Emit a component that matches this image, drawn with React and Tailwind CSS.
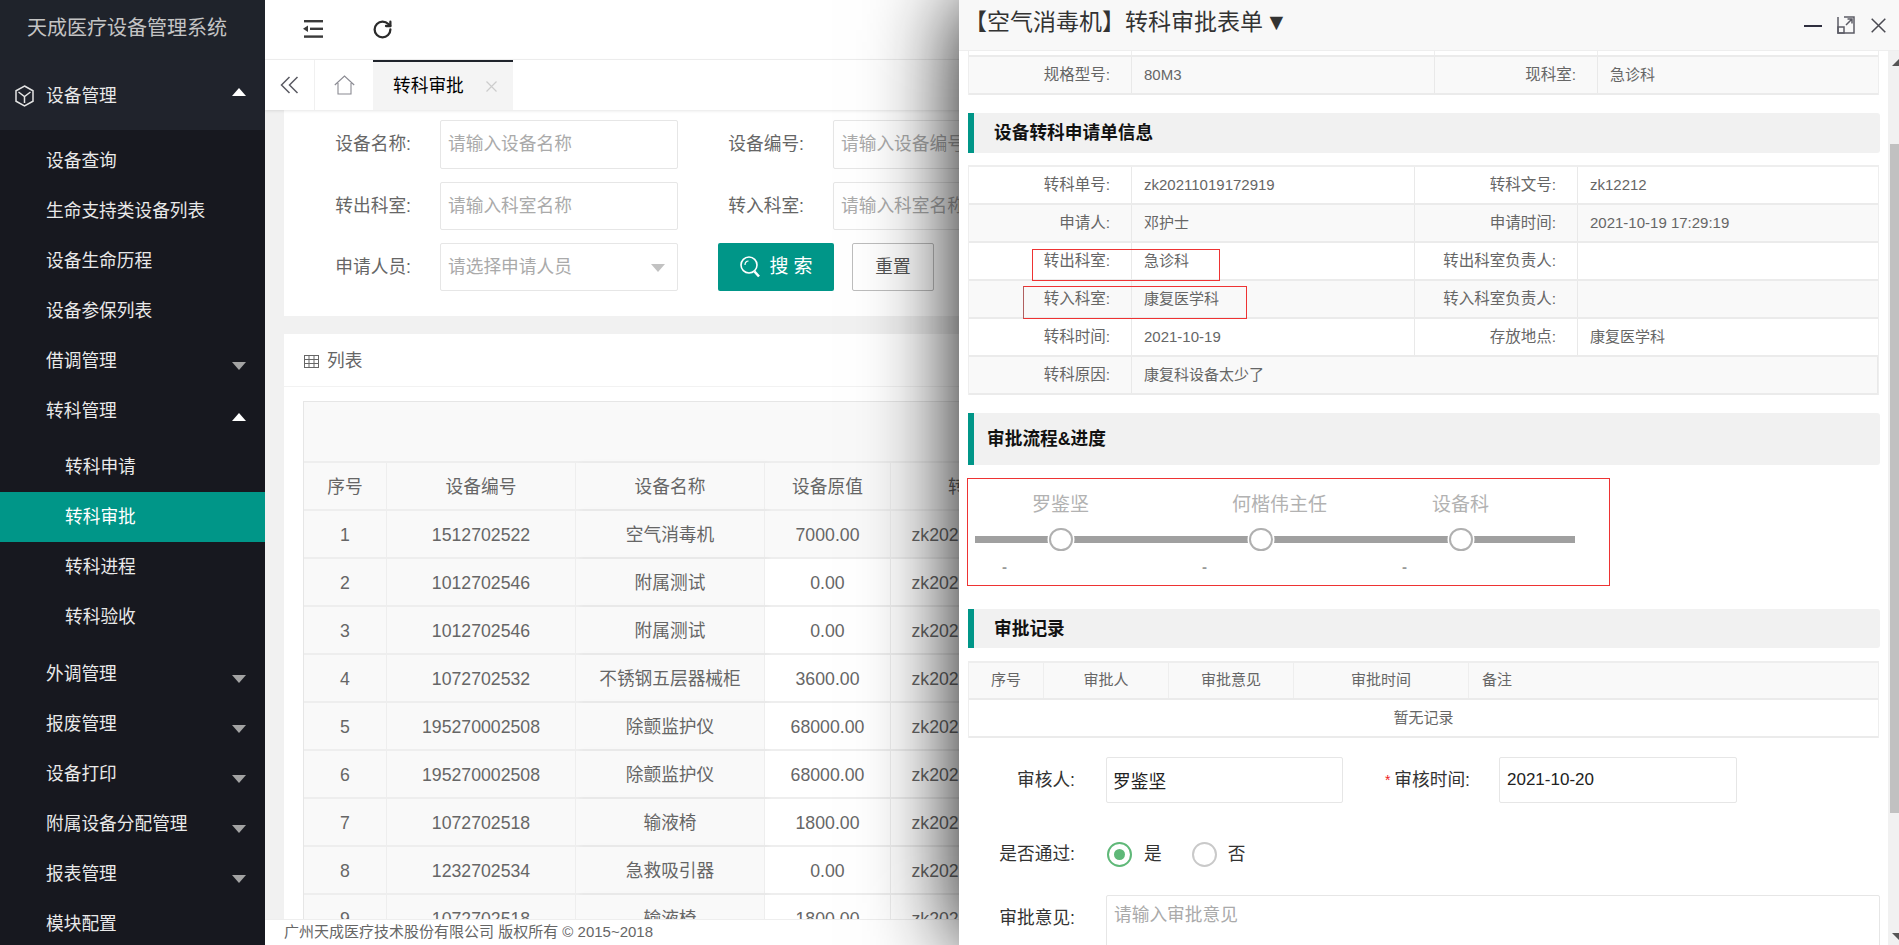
import React from "react";
import { RotateCw } from "lucide-react";

const Tri = ({ up, cls }) =>
  up ? (
    <span className={`w-0 h-0 border-x-[7px] border-x-transparent border-b-[8px] border-b-white ${cls || ""}`} />
  ) : (
    <span className={`w-0 h-0 border-x-[7px] border-x-transparent border-t-[8px] border-t-[#a3a3a3] ${cls || ""}`} />
  );

const SideRow = ({ text, arrow, sub, active }) => (
  <div className={`h-[50px] shrink-0 flex items-center justify-between pr-[19px] text-[17.7px] ${sub ? "pl-[65px]" : "pl-[46px]"} ${active ? "bg-[#009688] text-white" : "text-[#e9e9e9]"}`}>
    <span>{text}</span>
    {arrow === "down" && <Tri cls="mt-[10px]" />}
    {arrow === "up" && <Tri up cls="mt-[12px]" />}
  </div>
);

const Sidebar = () => (
  <aside className="w-[265px] shrink-0 h-full bg-[#17181f] flex flex-col overflow-hidden">
    <div className="h-[60px] shrink-0 bg-[#1f232b] flex items-center pl-[27px] pb-[5px] text-[20px] text-[#c4c4c4]">天成医疗设备管理系统</div>
    <div className="h-[70px] shrink-0 bg-[#20232c] pt-[2px] flex items-center justify-between pl-[15px] pr-[19px] text-[17.7px] text-[#e9e9e9]">
      <span className="flex items-center gap-[12px]">
        <svg width="19" height="22" viewBox="0 0 19 22" fill="none" stroke="#e4e4e4" strokeWidth="1.5">
          <path d="M9.5 1L18 5.8V16.2L9.5 21L1 16.2V5.8Z" />
          <path d="M3.5 7L9.5 11.5L15.5 7M9.5 11.5V18" />
        </svg>
        设备管理
      </span>
      <Tri up cls="mb-[8px]" />
    </div>
    <div className="pt-[6px] shrink-0">
      <SideRow text="设备查询" />
      <SideRow text="生命支持类设备列表" />
      <SideRow text="设备生命历程" />
      <SideRow text="设备参保列表" />
      <SideRow text="借调管理" arrow="down" />
      <SideRow text="转科管理" arrow="up" />
      <div className="pt-[6px] pb-[7px]">
        <SideRow sub text="转科申请" />
        <SideRow sub active text="转科审批" />
        <SideRow sub text="转科进程" />
        <SideRow sub text="转科验收" />
      </div>
      <SideRow text="外调管理" arrow="down" />
      <SideRow text="报废管理" arrow="down" />
      <SideRow text="设备打印" arrow="down" />
      <SideRow text="附属设备分配管理" arrow="down" />
      <SideRow text="报表管理" arrow="down" />
      <SideRow text="模块配置" />
    </div>
  </aside>
);

const Field = ({ label, placeholder, select }) => (
  <div className="flex items-center">
    <span className="w-[77px] text-[17.7px] text-[#666] text-right whitespace-nowrap">{label}</span>
    <div className="relative ml-[29px] w-[238px] h-full">
      <input
        readOnly
        placeholder={placeholder}
        className="w-full h-full border border-[#e6e6e6] rounded-[2px] pl-[7px] text-[17.7px] bg-white placeholder:text-[#aaaaaa] outline-none"
      />
      {select && (
        <span className="absolute right-[13px] top-[21px] w-0 h-0 border-x-[7px] border-x-transparent border-t-[8px] border-t-[#c2c2c2]" />
      )}
    </div>
  </div>
);

const rows = [
  ["1", "1512702522", "空气消毒机", "7000.00"],
  ["2", "1012702546", "附属测试", "0.00"],
  ["3", "1012702546", "附属测试", "0.00"],
  ["4", "1072702532", "不锈钢五层器械柜", "3600.00"],
  ["5", "195270002508", "除颤监护仪", "68000.00"],
  ["6", "195270002508", "除颤监护仪", "68000.00"],
  ["7", "1072702518", "输液椅", "1800.00"],
  ["8", "1232702534", "急救吸引器", "0.00"],
  ["9", "1072702518", "输液椅", "1800.00"],
];

const ListRow = ({ cells, hover, head }) => (
  <div className="grid grid-cols-[83px_189px_189px_126px_186px_1fr] border-b-2 border-[#eeeeee] text-[17.7px] text-[#666] h-[48px]">
    {cells.map((c, i) => (
      <div
        key={i}
        className={`flex items-center justify-center pt-[2px] border-r border-[#eeeeee] whitespace-nowrap ${i < 3 || hover || head ? "bg-[#f9f9f9]" : "bg-white"} ${i === 2 ? "shadow-[4px_0_6px_rgba(0,0,0,0.03)]" : ""} ${i === 4 && !head ? "pl-[10px]" : ""}`}
      >
        {c}
      </div>
    ))}
  </div>
);

const Main = () => (
  <div className="flex-1 min-w-0 h-full flex flex-col bg-[#f1f1f1]">
    <div className="h-[60px] bg-white border-b border-[#f0f0f0] flex items-center pb-[2px] pl-[38px] gap-[48px] shrink-0">
      <svg width="20" height="18" viewBox="0 0 20 18" fill="#3a3a3a">
        <rect x="1" y="0" width="19" height="2.4" />
        <rect x="7" y="7.6" width="13" height="2.4" />
        <rect x="1" y="15.4" width="19" height="2.4" />
        <path d="M0 8.8L5 5.5V12Z" />
      </svg>
      <RotateCw size={21} strokeWidth={2.6} color="#2b2b2b" className="mt-[1px] ml-[1px]" />
    </div>
    <div className="h-[50px] bg-white flex shrink-0 shadow-[0_1px_3px_rgba(0,0,0,0.1)] relative z-10">
      <div className="w-[50px] border-r border-[#f0f0f0] flex items-center justify-center">
        <svg width="19" height="18" viewBox="0 0 19 18" fill="none" stroke="#5a5a62" strokeWidth="1.5">
          <path d="M9.5 1L1.5 9L9.5 17M17.5 1L9.5 9L17.5 17" />
        </svg>
      </div>
      <div className="w-[58px] flex items-center justify-center">
        <svg width="21" height="20" viewBox="0 0 21 20" fill="none" stroke="#8a8a92" strokeWidth="1.1">
          <path d="M0.8 10L10.5 1L20.2 10M4 8V19H17V8" />
        </svg>
      </div>
      <div className="w-[140px] border-t-2 border-[#1f232b] bg-[#f4f4f4] flex items-center pl-[20px] text-[17.7px] text-black">
        转科审批
        <svg className="ml-[22px]" width="11" height="11" viewBox="0 0 11 11" fill="none" stroke="#cccccc" strokeWidth="1.2">
          <path d="M0.5 0.5L10.5 10.5M10.5 0.5L0.5 10.5" />
        </svg>
      </div>
    </div>
    <div className="flex-1 min-h-0 overflow-hidden pl-[19px]">
      <div className="bg-white h-[206px] pt-[10px] pl-[50px] w-[1600px] flex flex-col gap-[13px]">
        <div className="flex h-[49px] gap-[49px]">
          <Field label="设备名称:" placeholder="请输入设备名称" />
          <Field label="设备编号:" placeholder="请输入设备编号" />
        </div>
        <div className="flex h-[48px] gap-[49px]">
          <Field label="转出科室:" placeholder="请输入科室名称" />
          <Field label="转入科室:" placeholder="请输入科室名称" />
        </div>
        <div className="flex h-[48px]">
          <Field label="申请人员:" placeholder="请选择申请人员" select />
          <button className="ml-[40px] w-[116px] h-full bg-[#009688] rounded-[2px] pl-[5px] text-white text-[19px] flex items-center justify-center gap-[8px] tracking-[5px]">
            <svg width="22" height="24" viewBox="0 0 22 24" fill="none" stroke="white" strokeWidth="1.6">
              <circle cx="10" cy="10" r="8" />
              <path d="M15.5 16.5L20 21.5" strokeWidth="2.6" />
              <path d="M6 10C6 7.5 7.5 6 9.5 6" strokeWidth="1.2" />
            </svg>
            搜索
          </button>
          <button className="ml-[18px] w-[82px] h-full bg-white border border-[#bdbdbd] rounded-[2px] text-[17.7px] text-[#555]">重置</button>
        </div>
      </div>
      <div className="bg-white mt-[18px] w-[1600px] h-[640px]">
        <div className="h-[53px] border-b border-[#f2f2f2] flex items-center pt-[2px] pl-[20px] text-[17.7px] text-[#666] gap-[8px]">
          <svg width="15" height="13" viewBox="0 0 15 13" fill="none" stroke="#666" strokeWidth="1">
            <rect x="0.5" y="0.5" width="14" height="12" />
            <path d="M0.5 4.5H14.5M0.5 8.5H14.5M5 0.5V12.5M10 0.5V12.5" />
          </svg>
          列表
        </div>
        <div className="ml-[19px] mt-[14px] border-l border-t border-[#e6e6e6]">
          <div className="h-[61px] bg-[#f9f9f9] border-b-2 border-[#eeeeee]" />
          <ListRow head cells={["序号", "设备编号", "设备名称", "设备原值", "转科单号", ""]} />
          {rows.map((r, i) => (
            <ListRow key={r[0]} hover={i === 0} cells={[...r, "zk20211019172919", ""]} />
          ))}
        </div>
      </div>
    </div>
    <div className="h-[26px] bg-white border-t border-[#eeeeee] shrink-0 flex items-center pl-[19px] text-[15px] text-[#666] relative z-10">
      广州天成医疗技术股份有限公司 版权所有 © 2015~2018
    </div>
  </div>
);

const Cell = ({ label, children, right }) => (
  <div className={`flex items-center h-full border-r border-[#e9e9e9] whitespace-nowrap ${label ? "justify-end pr-[21px] text-[15.5px]" : "pl-[12px]"} ${right ? "border-r-0" : ""}`}>
    {children}
  </div>
);

const InfoRow = ({ cols, odd, a, b, c, d }) => (
  <div className={`grid ${cols} h-[38px] border-b-2 border-[#ebebeb] text-[15px] text-[#666] ${odd ? "bg-[#f9f9f9]" : "bg-white"}`}>
    <Cell label>{a}</Cell>
    <Cell>{b}</Cell>
    {c !== undefined && <Cell label>{c}</Cell>}
    {d !== undefined && <Cell right>{d}</Cell>}
  </div>
);

const SectionBar = ({ title, h, pl }) => (
  <div className={`bg-[#f1f1f1] border-l-[6px] border-[#009688] rounded-r-[3px] flex items-center pt-[1px] font-bold text-[17.7px] text-[#111] ${h} ${pl}`}>{title}</div>
);

const Step = ({ name }) => (
  <div className="w-[200px] shrink-0">
    <div className="h-[57px] pl-[57px] pt-[13px] text-[19px] text-[#b2b2b2] leading-[26px] whitespace-nowrap">{name}</div>
    <div className="relative h-[7px] bg-[#a0a0a0]">
      <span className="absolute left-[74px] top-[-8px] w-[24px] h-[23px] rounded-full bg-white border-2 border-[#b0b0b0] shadow-[0_0_0_1.5px_white]" />
    </div>
    <div className="h-[49px] pl-[27px] flex items-center font-bold text-[15px] text-[#999]">-</div>
  </div>
);

const Drawer = () => {
  const cols4 = "grid-cols-[163px_283px_163px_1fr]";
  const cols4b = "grid-cols-[163px_303px_163px_1fr]";
  return (
    <div className="absolute right-0 top-0 w-[940px] h-[945px] bg-white flex flex-col shadow-[0_0_85px_rgba(0,0,0,0.95)] z-20">
      <div className="h-[51px] shrink-0 bg-[#f8f8f8] border-b border-[#eeeeee] flex items-center pl-[5px] pr-[13px]">
        <span className="text-[23px] text-[#333] flex-1 pb-[6px] whitespace-nowrap">【空气消毒机】转科审批表单<span className="ml-[2px]">▼</span></span>
        <span className="w-[18px] h-[2px] bg-[#2f2f3f] mt-[1px]" />
        <svg className="ml-[15px]" width="18" height="18" viewBox="0 0 18 18" fill="none" stroke="#5c5c66" strokeWidth="1.5">
          <path d="M7 1H17V17H1V7M1 1V7" />
          <rect x="1" y="11" width="6" height="6" />
          <path d="M9 9L15 3M10.5 3H15V7.5" />
        </svg>
        <svg className="ml-[16px]" width="15" height="15" viewBox="0 0 15 15" fill="none" stroke="#4a4a52" strokeWidth="1.5">
          <path d="M0.7 0.7L14.3 14.3M14.3 0.7L0.7 14.3" />
        </svg>
      </div>
      <div className="flex-1 min-h-0 flex">
        <div className="flex-1 min-w-0 overflow-hidden pl-[9px] pr-[8px]">
          <div className="border-x border-[#eeeeee] w-[911px]">
            <div className={`grid ${cols4b} h-[6px] border-b-2 border-[#ebebeb]`}>
              <div className="border-r border-[#eeeeee]" />
              <div className="border-r border-[#eeeeee]" />
              <div className="border-r border-[#eeeeee]" />
            </div>
            <InfoRow cols={cols4b} odd a="规格型号:" b="80M3" c="现科室:" d="急诊科" />
          </div>
          <div className="mt-[18px]"><SectionBar title="设备转科申请单信息" h="h-[40px]" pl="pl-[20px]" /></div>
          <div className="relative mt-[12px] w-[911px] border-x border-t-2 border-[#eeeeee]">
            <InfoRow cols={cols4} a="转科单号:" b="zk20211019172919" c="转科文号:" d="zk12212" />
            <InfoRow cols={cols4} odd a="申请人:" b="邓护士" c="申请时间:" d="2021-10-19 17:29:19" />
            <InfoRow cols={cols4} a="转出科室:" b="急诊科" c="转出科室负责人:" d="" />
            <InfoRow cols={cols4} odd a="转入科室:" b="康复医学科" c="转入科室负责人:" d="" />
            <InfoRow cols={cols4} a="转科时间:" b="2021-10-19" c="存放地点:" d="康复医学科" />
            <InfoRow cols="grid-cols-[163px_1fr]" odd a="转科原因:" b="康复科设备太少了" />
            <span className="absolute left-[63px] top-[82px] w-[188px] h-[32px] border border-[#ee3333]" />
            <span className="absolute left-[54px] top-[119px] w-[224px] h-[33px] border border-[#ee3333] border-l-[#b06060]" />
          </div>
          <div className="mt-[18px]"><SectionBar title="审批流程&进度" h="h-[52px]" pl="pl-[13px]" /></div>
          <div className="mt-[13px] -ml-[1px] w-[643px] h-[108px] border border-[#ee3333] pl-[7px] flex overflow-hidden">
            <Step name="罗鉴坚" />
            <Step name="何楷伟主任" />
            <Step name="设备科" />
          </div>
          <div className="mt-[23px]"><SectionBar title="审批记录" h="h-[39px]" pl="pl-[20px]" /></div>
          <div className="mt-[13px] w-[911px] border-x border-t-2 border-[#eeeeee] text-[15px] text-[#666]">
            <div className="grid grid-cols-[75px_125px_125px_175px_1fr] h-[37px] bg-[#f9f9f9] border-b-2 border-[#ebebeb]">
              {["序号", "审批人", "审批意见", "审批时间"].map((t) => (
                <div key={t} className="flex items-center justify-center border-r border-[#eeeeee]">{t}</div>
              ))}
              <div className="flex items-center pl-[13px]">备注</div>
            </div>
            <div className="h-[38px] flex items-center justify-center border-b-2 border-[#ebebeb]">暂无记录</div>
          </div>
          <div className="mt-[19px] flex h-[46px] text-[17.7px] text-[#333]">
            <span className="w-[108px] pr-[1px] flex items-center justify-end whitespace-nowrap">审核人:</span>
            <input readOnly defaultValue="罗鉴坚" className="ml-[30px] w-[237px] h-full border border-[#e6e6e6] rounded-[2px] pl-[6px] text-[17.7px] text-[#222] outline-none" />
            <span className="ml-[39px] w-[88px] flex items-center justify-end whitespace-nowrap"><span className="text-[#ee2222] text-[14px] mr-[4px]">*</span>审核时间:</span>
            <input readOnly defaultValue="2021-10-20" className="ml-[29px] w-[238px] h-full border border-[#e6e6e6] rounded-[2px] pl-[7px] text-[17px] text-[#222] outline-none" />
          </div>
          <div className="mt-[31px] h-[40px] flex items-center text-[17.7px] text-[#333]">
            <span className="w-[108px] pr-[1px] text-right whitespace-nowrap">是否通过:</span>
            <span className="ml-[31px] w-[25px] h-[25px] rounded-full border-2 border-[#5fb878] flex items-center justify-center">
              <span className="w-[11px] h-[11px] rounded-full bg-[#5fb878]" />
            </span>
            <span className="ml-[12px]">是</span>
            <span className="ml-[30px] w-[25px] h-[25px] rounded-full border-2 border-[#c9c9c9]" />
            <span className="ml-[11px]">否</span>
          </div>
          <div className="mt-[21px] flex text-[17.7px] text-[#333]">
            <span className="w-[108px] pr-[1px] pt-[10px] text-right whitespace-nowrap">审批意见:</span>
            <textarea readOnly placeholder="请输入审批意见" className="ml-[30px] flex-1 h-[100px] border border-[#e6e6e6] rounded-[2px] pl-[7px] pt-[6px] text-[17.7px] placeholder:text-[#aaaaaa] outline-none resize-none" />
          </div>
        </div>
        <div className="w-[11px] shrink-0 bg-[#f1f1f1] relative pl-[2px]">
          <span className="absolute right-[0px] top-[8px] w-0 h-0 border-l-[7px] border-l-transparent border-b-[7px] border-b-[#555]" />
          <div className="h-[669px] mt-[93px] bg-[#c1c1c1]" />
          <span className="absolute right-[0px] bottom-[5px] w-0 h-0 border-l-[7px] border-l-transparent border-t-[7px] border-t-[#555]" />
        </div>
      </div>
    </div>
  );
};

export default function App() {
  return (
    <div className="relative w-[1899px] h-[945px] overflow-hidden flex bg-white [font-family:'Liberation_Sans','Noto_Sans_CJK_SC',sans-serif]">
      <Sidebar />
      <Main />
      <Drawer />
    </div>
  );
}
